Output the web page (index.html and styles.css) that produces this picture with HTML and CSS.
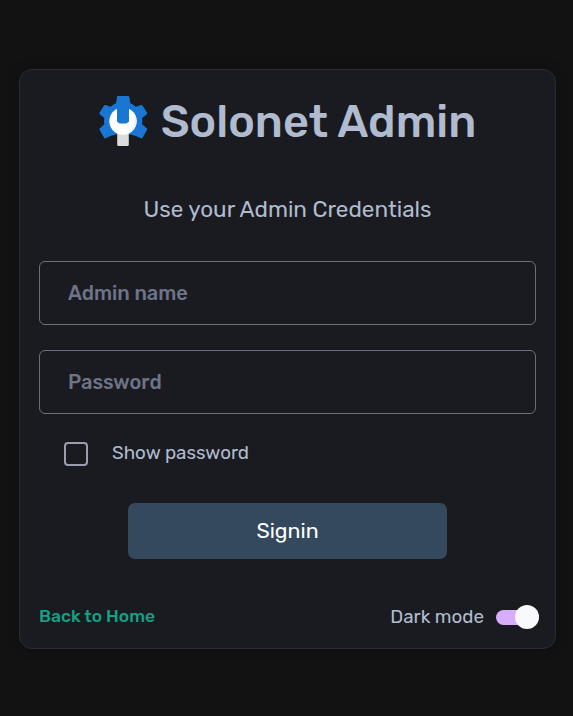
FILE: index.html
```html
<!DOCTYPE html>
<html lang="en">
<head>
<meta charset="utf-8">
<title>Solonet Admin</title>
<link rel="stylesheet" href="styles.css">
</head>
<body>
<main class="card">
  <header class="brand">
    <svg class="logo" viewBox="0 0 50 52" aria-hidden="true">
      <path fill="#1976d2" d="M18 1Q18.1 0 19 0H29.2Q30.2 0 30.3 1L31.3 7.2Q34.4 8.5 36.8 10.8L42 9Q43 8.7 43.5 9.6L48.1 16.8Q48.5 17.6 47.8 18.2L43.1 22Q43.7 25 43.1 28.2L47.9 32.4Q48.6 33 48.1 33.8L43.5 41.8Q43 42.6 42 42.3L36.8 40L31.5 38.6H16.8L11.6 40L6.6 42.3Q5.6 42.6 5.1 41.8L.5 33.8Q0 33 .7 32.4L5.3 28.2Q4.7 25 5.3 22L.7 18.2Q0 17.6.5 16.8L5.1 9.6Q5.6 8.7 6.6 9L11.6 10.8Q14 8.5 17 7.2Z"/>
      <path fill="#dcdcdc" d="M18.2 36H29.8V48.5Q29.8 50 28.3 50H19.7Q18.2 50 18.2 48.5Z"/>
      <path fill="#fff" d="M18 12.8V25.5L20.5 27.5H27.5L30 25.5V12.8A13.7 13.7 0 1 1 18 12.8Z"/>
      <path fill="#eee" d="M33.5 15.3A13.7 13.7 0 0 1 29.8 37.5L28 38.2C36 33 38 23 33.5 15.3Z"/>
    </svg>
    <h1 class="title">Solonet Admin</h1>
  </header>
  <p class="subtitle"><span>Use your Admin Credentials</span></p>
  <form class="form">
    <input class="field" type="text" placeholder="Admin name" aria-label="Admin name">
    <input class="field" type="password" placeholder="Password" aria-label="Password">
    <label class="show"><input class="check" type="checkbox"><span>Show password</span></label>
    <button class="signin" type="button">Signin</button>
  </form>
  <footer class="footer">
    <a class="home">Back to Home</a>
    <div class="mode"><span>Dark mode</span><i class="track"><b class="thumb"></b></i></div>
  </footer>
</main>
</body>
</html>
```
FILE: styles.css
```css
* { box-sizing: border-box; }
body {
  margin: 0;
  height: 716px;
  padding: 69px 17px 0 19px;
  background: #121212;
  color: #b0bbcf;
  font-family: Rubik, Roboto, sans-serif;
  overflow: hidden;
}
.card {
  height: 580px;
  padding: 26px 19px 0;
  background: #1a1b20;
  border: 1px solid #2a2d35;
  border-radius: 13px;
  box-shadow: 0 0 12px rgba(0, 0, 0, .25);
}
.brand { display: flex; justify-content: center; gap: 12px; height: 52px; }
.logo { width: 50px; height: 52px; flex: none; }
.title {
  margin: 0;
  font-size: 45px;
  line-height: 52px;
  font-weight: 500;
  white-space: nowrap;
}
.subtitle {
  margin: 47px 0 0;
  height: 30px;
  line-height: 30px;
  font-size: 22.5px;
  text-align: center;
}
.form { display: flex; flex-direction: column; margin-top: 36px; }
.field {
  height: 64px;
  margin: 0 0 25px;
  padding: 0 28px;
  background: transparent;
  border: 1px solid #6b6e7c;
  border-radius: 6px;
  font: 500 20px Rubik, Roboto, sans-serif;
  color: #b0bbcf;
}
.field::placeholder { color: #6e7487; opacity: 1; }
.show {
  display: flex;
  align-items: center;
  gap: 24px;
  height: 24px;
  margin: 3px 0 0 25px;
  font-size: 18.8px;
}
.show span { padding-bottom: 4px; }
.check {
  appearance: none;
  width: 24px;
  height: 24px;
  margin: 0;
  border: 2px solid #9a9eaf;
  border-radius: 4px;
}
.signin {
  width: 319px;
  height: 56px;
  margin: 37px auto 0;
  padding: 0 0 2px;
  border: 0;
  border-radius: 7px;
  background: #34495e;
  color: #fff;
  font: 400 21.3px Rubik, Roboto, sans-serif;
}
.footer {
  display: flex;
  align-items: center;
  justify-content: space-between;
  height: 26px;
  margin: 45px -3px 0 0;
}
.home { color: #16a085; font-size: 17.5px; font-weight: 500; padding-bottom: 3px; }
.mode { display: flex; align-items: center; gap: 12px; font-size: 18.8px; }
.mode span { padding-bottom: 2px; }
.track {
  display: flex;
  align-items: center;
  justify-content: flex-end;
  width: 43px;
  height: 15px;
  border-radius: 8px;
  background: #d7aefb;
}
.thumb { width: 24px; height: 24px; border-radius: 50%; background: #f8f9fa; flex: none; }
```
